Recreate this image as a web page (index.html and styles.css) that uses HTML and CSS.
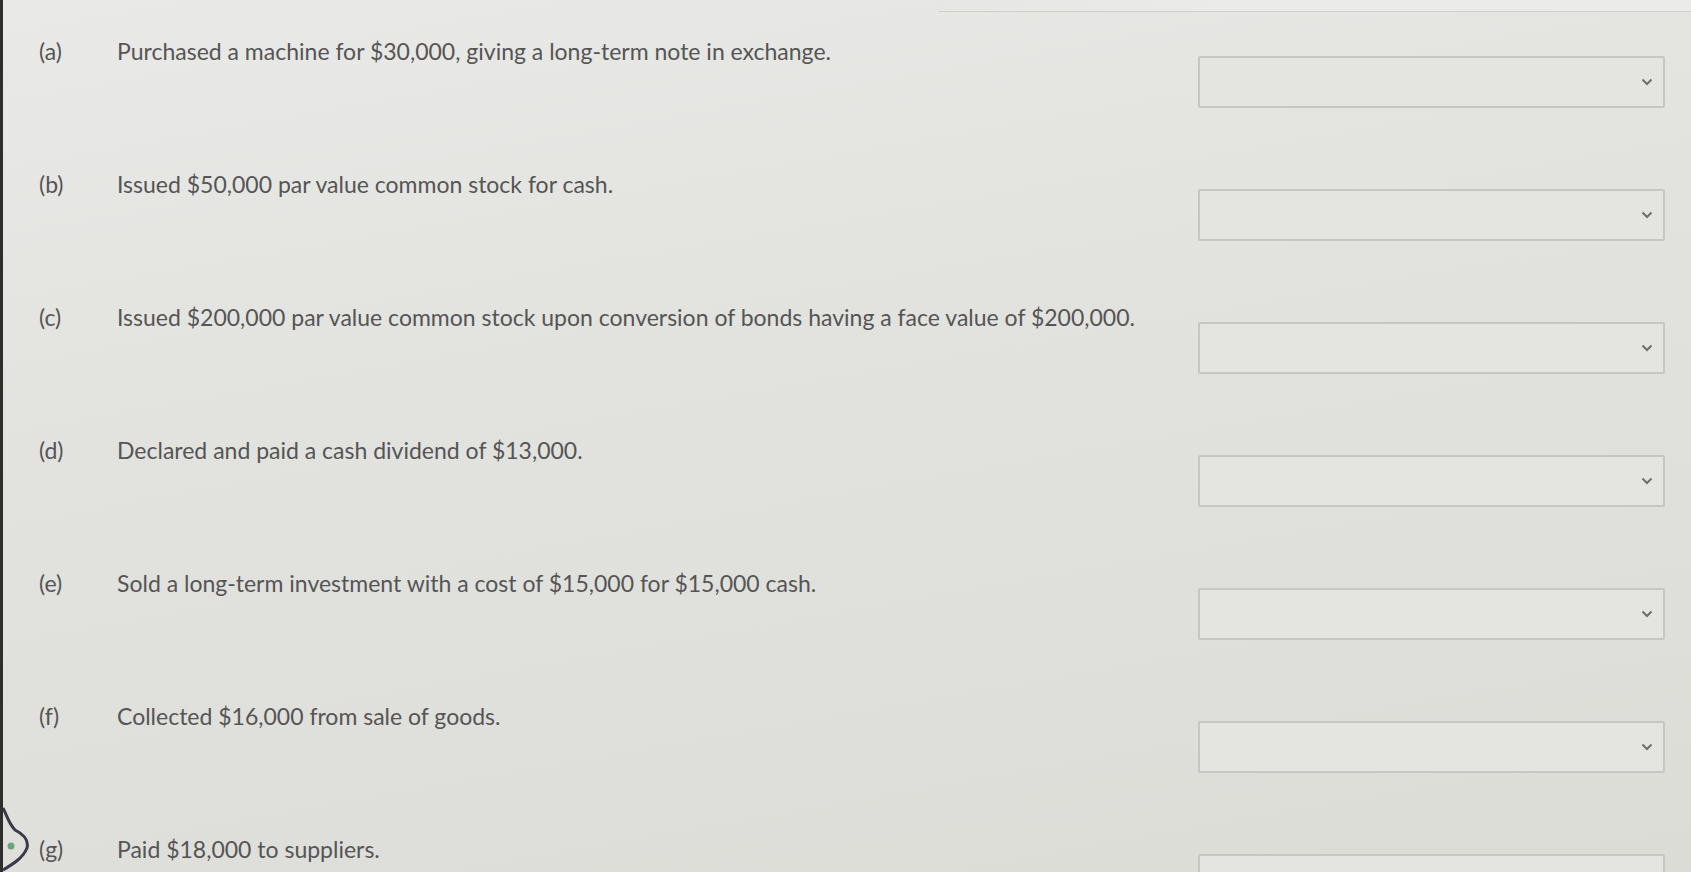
FILE: index.html
```html
<!DOCTYPE html>
<html>
<head>
<meta charset="utf-8">
<link rel="stylesheet" href="styles.css">
</head>
<body>
<div class="page">
  <div class="topline"></div>
  <div class="row"><span class="label">(a)</span><span class="text">Purchased a machine for $30,000, giving a long-term note in exchange.</span><div class="select"><svg class="chev" viewBox="0 0 12 8"><path d="M1.5 1.5 L6 6 L10.5 1.5" /></svg></div></div>
  <div class="row"><span class="label">(b)</span><span class="text">Issued $50,000 par value common stock for cash.</span><div class="select"><svg class="chev" viewBox="0 0 12 8"><path d="M1.5 1.5 L6 6 L10.5 1.5" /></svg></div></div>
  <div class="row"><span class="label">(c)</span><span class="text">Issued $200,000 par value common stock upon conversion of bonds having a face value of $200,000.</span><div class="select"><svg class="chev" viewBox="0 0 12 8"><path d="M1.5 1.5 L6 6 L10.5 1.5" /></svg></div></div>
  <div class="row"><span class="label">(d)</span><span class="text">Declared and paid a cash dividend of $13,000.</span><div class="select"><svg class="chev" viewBox="0 0 12 8"><path d="M1.5 1.5 L6 6 L10.5 1.5" /></svg></div></div>
  <div class="row"><span class="label">(e)</span><span class="text">Sold a long-term investment with a cost of $15,000 for $15,000 cash.</span><div class="select"><svg class="chev" viewBox="0 0 12 8"><path d="M1.5 1.5 L6 6 L10.5 1.5" /></svg></div></div>
  <div class="row"><span class="label">(f)</span><span class="text">Collected $16,000 from sale of goods.</span><div class="select"><svg class="chev" viewBox="0 0 12 8"><path d="M1.5 1.5 L6 6 L10.5 1.5" /></svg></div></div>
  <div class="row"><span class="label">(g)</span><span class="text">Paid $18,000 to suppliers.</span><div class="select"><svg class="chev" viewBox="0 0 12 8"><path d="M1.5 1.5 L6 6 L10.5 1.5" /></svg></div></div>
</div>
<svg class="cursor" viewBox="0 0 30 72"><path d="M0 8 C4 16 6 24 12 30 C20 34 26 40 24 48 C20 58 10 64 0 70" /><circle cx="8" cy="46" r="3.5" /></svg>
</body>
</html>
```
FILE: styles.css
```css
html, body {
  margin: 0;
  padding: 0;
  height: 100%;
  overflow: hidden;
}
body {
  background: linear-gradient(170deg, #e9e9e7 0%, #e2e2df 40%, #dcdcd7 100%);
  font-family: Lato, "Open Sans", sans-serif;
  color: #555555;
  position: relative;
  border-left: 3px solid #2e2e2e;
  box-sizing: border-box;
}
.page {
  padding: 0 26px 0 36px;
  height: 100%;
  box-sizing: border-box;
}
.topline {
  height: 11px;
  margin-left: 900px;
  margin-right: -26px;
  border-bottom: 1px solid #cfcfcb;
  background: linear-gradient(90deg, rgba(236,236,234,0) 0%, #ebebe9 40%);
  margin-bottom: 24px;
}
.row {
  display: grid;
  grid-template-columns: 78px 1fr 467px;
  height: 133px;
  align-items: start;
}
.label, .text {
  font-size: 23px;
  line-height: 30px;
}
.select {
  margin-top: 20px;
  height: 48px;
  border: 2px solid #c6c6c2;
  border-radius: 2px;
  background: #e4e4e1;
  display: flex;
  align-items: center;
  justify-content: flex-end;
  padding-right: 10px;
}
.chev {
  width: 12px;
  height: 8px;
  fill: none;
  stroke: #6e6e6e;
  stroke-width: 2;
}
.cursor {
  position: absolute;
  left: 0;
  top: 800px;
  width: 30px;
  height: 72px;
  fill: none;
  stroke: #3a3a4a;
  stroke-width: 3;
}
.cursor circle {
  fill: #6aa67a;
  stroke: none;
}
```
